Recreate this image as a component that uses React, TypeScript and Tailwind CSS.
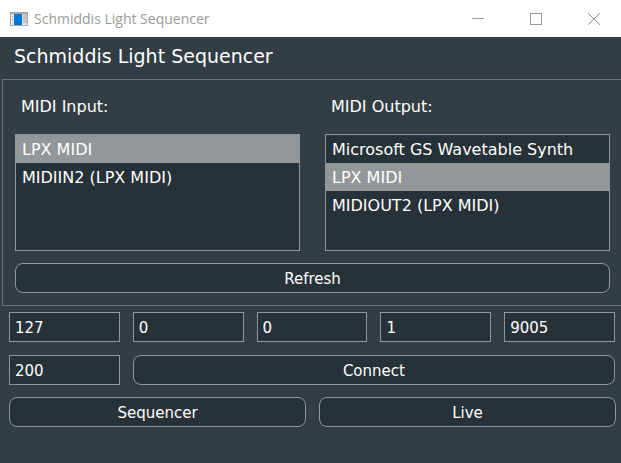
import { useState } from "react";

const buttonClass =
  "block h-[30px] w-full rounded-[8px] border border-[#8e989b] bg-[#263238] pt-px text-center text-[15px] leading-[28px] text-white";

const inputs = ["LPX MIDI", "MIDIIN2 (LPX MIDI)"];
const outputs = ["Microsoft GS Wavetable Synth", "LPX MIDI", "MIDIOUT2 (LPX MIDI)"];
const address = [
  { label: "Address part 1", value: "127" },
  { label: "Address part 2", value: "0" },
  { label: "Address part 3", value: "0" },
  { label: "Address part 4", value: "1" },
  { label: "Port", value: "9005" },
];

function DeviceList({ id, label, items, initial }: { id: string; label: string; items: string[]; initial: number }) {
  const [selected, setSelected] = useState(initial);
  return (
    <div>
      <h2 id={id} className="h-[54px] pl-[6px] text-[16px] leading-[54px]">
        {label}
      </h2>
      <div role="listbox" aria-labelledby={id} className="h-[117px] border border-[#8e989b] bg-[#263238]">
        {items.map((item, i) => (
          <button
            key={item}
            type="button"
            role="option"
            aria-selected={i === selected}
            onClick={() => setSelected(i)}
            className={`block h-[28px] w-full pt-px pl-[6px] text-left text-[16px] leading-[28px] ${
              i === selected ? "bg-[#92979a]" : ""
            }`}
          >
            {item}
          </button>
        ))}
      </div>
    </div>
  );
}

function Field({ label, value }: { label: string; value: string }) {
  return (
    <input
      type="text"
      aria-label={label}
      defaultValue={value}
      className="h-[30px] w-full min-w-0 rounded-none border border-[#8e989b] bg-[#263238] px-[5px] pt-px text-[15px] text-white outline-none"
    />
  );
}

function TitleBar() {
  return (
    <header className="flex h-[37px] items-center bg-white pl-[10px] font-['Open_Sans','Noto_Sans',sans-serif] text-[#999999]">
      <svg width="18" height="14" viewBox="0 0 18 14" shapeRendering="crispEdges" aria-hidden="true">
        <rect width="18" height="14" fill="#a5a5a5" />
        <rect x="1" y="2" width="16" height="11" fill="#e9e9e9" />
        <rect x="4" y="2" width="9" height="11" fill="#dcdcdc" />
        <rect x="4" y="2" width="8" height="11" fill="#0078d7" />
        <rect x="13" y="2" width="4" height="9" fill="#c4c4c4" />
        <rect x="2" y="4" width="1" height="1" fill="#a0a0a0" />
        <rect x="2" y="7" width="1" height="1" fill="#a0a0a0" />
      </svg>
      <span className="ml-[6px] flex-1 text-[14px] leading-[20px]">Schmiddis Light Sequencer</span>
      <div className="flex gap-[12px] pr-[4px]">
        <button type="button" aria-label="Minimize" className="flex h-[36px] w-[46px] items-center justify-center">
          <svg width="12" height="12" viewBox="0 0 12 12" stroke="#999999" fill="none">
            <path d="M0 5.5h12" />
          </svg>
        </button>
        <button type="button" aria-label="Maximize" className="flex h-[36px] w-[46px] items-center justify-center">
          <svg width="12" height="12" viewBox="0 0 12 12" stroke="#999999" fill="none">
            <rect x="0.5" y="0.5" width="11" height="11" />
          </svg>
        </button>
        <button type="button" aria-label="Close" className="flex h-[36px] w-[46px] items-center justify-center">
          <svg width="12" height="12" viewBox="0 0 12 12" stroke="#8a8a8a" fill="none">
            <path d="M0.2 0.2l11.6 11.6M11.8 0.2L0.2 11.8" />
          </svg>
        </button>
      </div>
    </header>
  );
}

export default function App() {
  return (
    <div className="flex min-h-screen flex-col bg-[#323e44] font-['DejaVu_Sans',Verdana,sans-serif] text-white">
      <TitleBar />
      <main>
        <h1 className="h-[42px] pl-[14px] text-[19px] leading-[38px]">Schmiddis Light Sequencer</h1>
        <section className="ml-[2px] border border-r-0 border-[#6b7377] pr-[11px] pb-[12px] pl-[12px]">
          <div className="grid grid-cols-2 gap-x-[25px]">
            <DeviceList id="midi-input" label="MIDI Input:" items={inputs} initial={0} />
            <DeviceList id="midi-output" label="MIDI Output:" items={outputs} initial={1} />
          </div>
          <button type="button" className={`mt-[12px] ${buttonClass}`}>
            Refresh
          </button>
        </section>
        <form className="mt-[6px] pr-[6px] pl-[9px]" onSubmit={(e) => e.preventDefault()}>
          <div className="grid grid-cols-5 gap-x-[13px] gap-y-[13px]">
            {address.map((f) => (
              <Field key={f.label} label={f.label} value={f.value} />
            ))}
            <Field label="Tempo" value="200" />
            <button type="submit" className={`col-span-4 ${buttonClass}`}>
              Connect
            </button>
          </div>
        </form>
        <nav className="mt-[12px] grid grid-cols-2 gap-x-[13px] pr-[5px] pl-[9px]">
          <button type="button" className={buttonClass}>
            Sequencer
          </button>
          <button type="button" className={buttonClass}>
            Live
          </button>
        </nav>
      </main>
    </div>
  );
}
